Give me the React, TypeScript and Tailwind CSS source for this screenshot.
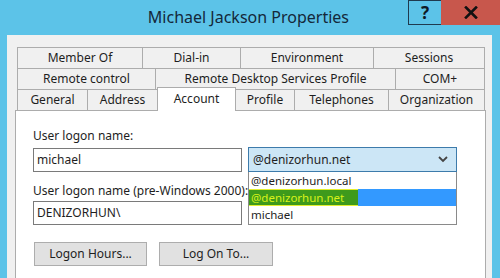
import React from "react";

const font = { fontFamily: '"Noto Sans", "Open Sans", Arial, sans-serif' };

function Tab({ label, w, first }: { label: string; w: string; first?: boolean }) {
  return (
    <div
      className={`${w} h-[21px] shrink-0 flex items-center justify-center border-t border-r border-[#acacac] bg-[#f0f0f0] text-[12px] text-[#1e1e1e] ${first ? "border-l" : ""}`}
    >
      {label}
    </div>
  );
}

export default function App() {
  return (
    <div className="w-[500px] h-[278px] overflow-hidden bg-[#5cc3e8] flex flex-col" style={font}>
      {/* title bar */}
      <div className="h-[35px] shrink-0 flex">
        <div className="w-[408px] flex items-center justify-end pr-[59px] pb-[1px]">
          <span className="text-[16px] text-[#14283a]">Michael Jackson Properties</span>
        </div>
        <div className="w-[34px] h-[25px] border border-[#1f3a4f] flex items-center justify-center text-[17px] font-bold text-[#0e1a26]">
          ?
        </div>
        <div className="flex-1 h-[25px] bg-[#c8574c] flex items-center justify-center -ml-px">
          <svg width="14" height="13" viewBox="0 0 14 13">
            <path d="M2 1.5 L12 11.5 M12 1.5 L2 11.5" stroke="#111" strokeWidth="2.6" strokeLinecap="square" />
          </svg>
        </div>
      </div>

      {/* dialog body */}
      <div className="ml-[7px] mr-[8px] h-[260px] shrink-0 bg-[#f0f0f0] pl-[8px] pr-[6px] pt-[12px] flex flex-col">
        <div className="ml-[2px] flex flex-col">
          <div className="flex">
            <Tab label="Member Of" w="w-[126px]" first />
            <Tab label="Dial-in" w="w-[98px]" />
            <Tab label="Environment" w="w-[133px]" />
            <Tab label="Sessions" w="w-[111px]" />
          </div>
          <div className="flex">
            <Tab label="Remote control" w="w-[139px]" first />
            <Tab label="Remote Desktop Services Profile" w="w-[240px]" />
            <Tab label="COM+" w="w-[89px]" />
          </div>
          <div className="flex items-end h-[21px]">
            <Tab label="General" w="w-[71px]" first />
            <Tab label="Address" w="w-[70px]" />
            <div className="relative z-10 -ml-px w-[79px] h-[24px] -mb-px shrink-0 bg-white border-t border-l border-r border-[#acacac] flex items-start justify-center pt-[2px] text-[12px] text-[#1e1e1e]">
              Account
            </div>
            <Tab label="Profile" w="w-[59px]" />
            <Tab label="Telephones" w="w-[94px]" />
            <Tab label="Organization" w="w-[96px]" />
          </div>
        </div>

        {/* panel */}
        <div className="w-[471px] flex-1 bg-white border border-[#acacac] pl-[17px] pt-[16px] flex flex-col text-[12px] text-[#1e1e1e]">
          <div className="h-[17px] leading-[17px]">User logon name:</div>
          <div className="mt-[4px] flex gap-[6px] relative">
            <div className="w-[209px] h-[24px] border border-[#7a7a7a] bg-white flex items-center pl-[3px]">michael</div>
            <div className="relative w-[209px] h-[24px] -mt-px">
              <div className="h-[25px] border border-[#3d7bab] bg-[#cce6f6] flex items-center pl-[4px] pr-[8px] justify-between">
                <span>@denizorhun.net</span>
                <svg width="10" height="7" viewBox="0 0 10 7">
                  <path d="M1 1 L5 5 L9 1" stroke="#444" strokeWidth="1.8" fill="none" />
                </svg>
              </div>
              <div className="absolute left-0 top-[25px] w-[209px] h-[53px] bg-white border border-[#8a8a8a] border-t-0 flex flex-col z-20 text-[11.5px]">
                <div className="h-[17px] flex items-center pl-[2px]">@denizorhun.local</div>
                <div className="h-[17px] bg-[#3399ff] flex items-stretch">
                  <span className="flex items-center pl-[2px] pr-[14px] bg-[#3e9a1c] text-[#d9f21a] border-t border-b border-[#e4ef30]">
                    @denizorhun.net
                  </span>
                </div>
                <div className="h-[17px] flex items-center pl-[2px]">michael</div>
              </div>
            </div>
          </div>
          <div className="mt-[10px] h-[17px] leading-[17px]">User logon name (pre-Windows 2000):</div>
          <div className="mt-[2px] w-[209px] h-[24px] border border-[#7a7a7a] bg-white flex items-center pl-[3px]">DENIZORHUN\</div>
          <div className="mt-[17px] flex gap-[12px] pl-[1px]">
            <div className="w-[113px] h-[24px] border border-[#adadad] bg-[#e1e1e1] flex items-center justify-center">Logon Hours...</div>
            <div className="w-[114px] h-[24px] border border-[#adadad] bg-[#e1e1e1] flex items-center justify-center">Log On To...</div>
          </div>
        </div>
      </div>
    </div>
  );
}
